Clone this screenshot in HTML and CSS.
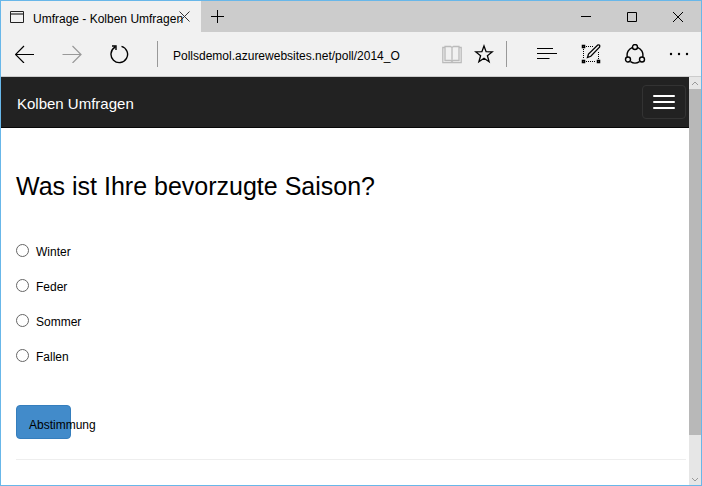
FILE: index.html
```html
<!DOCTYPE html>
<html lang="de">
<head>
<meta charset="utf-8">
<title>Umfrage - Kolben Umfragen</title>
<link rel="stylesheet" href="styles.css">
</head>
<body>
<div class="window">
  <header class="titlebar">
    <div class="tab">
      <svg class="tab-icon" width="14" height="12" viewBox="0 0 14 12"><path d="M.5.5h13v11H.5z" fill="none" stroke="#222"/><path d="M1 3h12" stroke="#777" stroke-width="2"/></svg>
      <span class="tab-title">Umfrage - Kolben Umfragen</span>
      <button class="tab-close" aria-label="Tab schließen"><svg width="11" height="11" viewBox="0 0 11 11"><path d="M.5.5l10 10M10.5.5l-10 10"/></svg></button>
    </div>
    <button class="new-tab" aria-label="Neuer Tab"><svg width="13" height="13" viewBox="0 0 13 13"><path d="M6.5 0v13M0 6.5h13"/></svg></button>
    <div class="window-controls">
      <button aria-label="Minimieren"><svg width="10" height="10" viewBox="0 0 10 10"><path d="M0 4.500h10"/></svg></button>
      <button aria-label="Maximieren"><svg width="10" height="10" viewBox="0 0 10 10"><path d="M.5.5h9v9h-9z"/></svg></button>
      <button aria-label="Schließen"><svg width="10" height="10" viewBox="0 0 10 10"><path d="M0 0l10 10M10 0L0 10"/></svg></button>
    </div>
  </header>
  <div class="toolbar">
    <div class="history">
      <button aria-label="Zurück"><svg width="20" height="18" viewBox="0 0 20 18"><path d="M.5 9.500H19M9 1L.5 9.500 9 18" stroke-width="1.200"/></svg></button>
      <button class="disabled" aria-label="Vorwärts"><svg width="20" height="18" viewBox="0 0 20 18"><path d="M.5 9.500H19M10.500 1L19 9.500 10.500 18" stroke-width="1.200"/></svg></button>
      <button aria-label="Aktualisieren"><svg width="20" height="20" viewBox="0 0 20 20"><path d="M12.500 2.300A8.300 8.300 0 1 1 6 3.200M3 2h4v4" stroke-width="1.400"/></svg></button>
    </div>
    <div class="address">
      <input type="text" aria-label="Adresse" value="Pollsdemol.azurewebsites.net/poll/2014_O">
      <button class="reading" aria-label="Leseansicht"><svg width="20" height="19" viewBox="0 0 20 19"><path d="M3 1.500h5.500L10 2.500l1.500-1H17v14h-5.500L10 16.500l-1.500-1H3zM10 2.500v14M3 2.500H.8v15.200h18.400V2.500H17" stroke-width="1.300"/></svg></button>
      <button aria-label="Favorit"><svg width="20" height="20" viewBox="0 0 20 20"><path d="M10 2l2.100 5.700 6.100.2-4.800 3.800 1.700 6-5.100-3.500-5.100 3.500 1.700-6-4.800-3.800 6.100-.2z" stroke-width="1.300"/></svg></button>
    </div>
    <div class="tools">
      <button aria-label="Hub"><svg width="20" height="20" viewBox="0 0 20 20"><path d="M0 4.500h16M0 9.500h20M0 14.500h12.500" stroke-width="1.200"/></svg></button>
      <button aria-label="Webseitennotiz"><svg width="20" height="20" viewBox="0 0 20 20"><path d="M5 2.500h7M2.500 5v10M5 17.500h10M17.500 8v7" stroke-dasharray="1 1"/><path d="M1.500 1.500h2v2h-2zM1.500 16.500h2v2h-2zM16.500 16.500h2v2h-2z" stroke-width="1.500"/><path d="M6.500 13.500l1-3.500 9-8.800q1.500-.7 2 0t0 2L9.800 12.300z" stroke-width="1.300"/></svg></button>
      <button aria-label="Teilen"><svg width="22" height="20" viewBox="0 0 22 20"><g stroke-width="1.400"><path d="M8.500 3.300A8.300 8.300 0 0 0 3.300 13M13.500 3.300A8.300 8.300 0 0 1 18.700 13M6.500 17.700a8.300 8.300 0 0 0 9 0"/><circle cx="11" cy="3" r="2.500"/><circle cx="4" cy="15.500" r="2.500"/><circle cx="18" cy="15.500" r="2.500"/></g></svg></button>
      <button aria-label="Mehr"><svg width="20" height="20" viewBox="0 0 20 20"><g class="dots"><circle cx="2" cy="10" r="1.200"/><circle cx="10" cy="10" r="1.200"/><circle cx="18" cy="10" r="1.200"/></g></svg></button>
    </div>
  </div>
  <div class="viewport">
    <div class="page">
      <nav class="navbar">
        <a class="brand" href="#">Kolben Umfragen</a>
        <button class="menu-toggle" aria-label="Navigation umschalten"><span></span><span></span><span></span></button>
      </nav>
      <main class="content">
        <h1>Was ist Ihre bevorzugte Saison?</h1>
        <form>
          <label class="choice"><input type="radio" name="choice">Winter</label>
          <label class="choice"><input type="radio" name="choice">Feder</label>
          <label class="choice"><input type="radio" name="choice">Sommer</label>
          <label class="choice"><input type="radio" name="choice">Fallen</label>
          <button class="vote" type="button">Abstimmung</button>
        </form>
        <hr>
      </main>
    </div>
    <div class="scrollbar">
      <button aria-label="Nach oben"><svg width="8" height="5" viewBox="0 0 8 5"><path d="M1 4l3-3 3 3"/></svg></button>
      <div class="track"><div class="thumb"></div></div>
      <button aria-label="Nach unten"><svg width="8" height="5" viewBox="0 0 8 5"><path d="M1 1l3 3 3-3"/></svg></button>
    </div>
  </div>
</div>
</body>
</html>
```
FILE: styles.css
```css
* {
  box-sizing: border-box;
}

body {
  margin: 0;
  background: #fff;
  color: #000;
  font: 12px/16px "Liberation Sans", Arial, sans-serif;
}

button {
  display: flex;
  align-items: center;
  justify-content: center;
  margin: 0;
  padding: 0;
  border: 0;
  background: none;
  color: inherit;
  font: inherit;
}

svg {
  display: block;
  flex: none;
  fill: none;
  stroke: #000;
}

.window {
  display: flex;
  flex-direction: column;
  min-height: 100vh;
  border: 1px solid #68b7e9;
}

.titlebar {
  display: flex;
  height: 31px;
  background: #ccc;
}

.tab {
  display: flex;
  align-items: center;
  width: 200px;
  padding: 0 11px 0 9px;
  background: #f1f1f1;
}

.tab-icon {
  margin-right: 9px;
}

.tab-title {
  flex: 1;
  min-width: 0;
  padding-top: 4px;
  white-space: nowrap;
}

.tab-close svg {
  stroke: #333;
}

.new-tab {
  width: 32px;
}

.window-controls {
  display: flex;
  margin-left: auto;
}

.window-controls button {
  width: 46px;
}

.toolbar {
  display: flex;
  align-items: center;
  height: 45px;
  border-bottom: 1px solid #ccc;
  background: #f1f1f1;
}

.history {
  display: flex;
  align-items: center;
  width: 156px;
  padding-right: 14px;
}

.history button {
  flex: 1;
}

.history .disabled svg {
  stroke: #999;
}

.address {
  display: flex;
  flex: 1;
  align-items: center;
  min-width: 0;
  height: 26px;
  padding-right: 6px;
  border: solid #999;
  border-width: 0 1px;
}

.address input {
  flex: 1;
  min-width: 0;
  margin: 0;
  padding: 4px 15px 0;
  border: 0;
  background: none;
  color: inherit;
  font: inherit;
}

.address button {
  width: 32px;
}

.address .reading svg {
  stroke: #bbb;
}

.tools {
  display: flex;
  padding: 0 0 0 18px;
}

.tools button {
  width: 44px;
}

.dots {
  fill: #000;
  stroke: none;
}

.viewport {
  display: flex;
  flex: 1;
}

.page {
  flex: 1;
  min-width: 0;
}

.navbar {
  display: flex;
  align-items: center;
  justify-content: space-between;
  height: 51px;
  padding: 0 3px 0 16px;
  border-bottom: 1px solid #080808;
  background: #222;
}

.brand {
  padding-top: 4px;
  color: #fff;
  font-size: 15px;
  line-height: 20px;
  text-decoration: none;
}

.menu-toggle {
  flex-direction: column;
  gap: 4px;
  width: 44px;
  height: 34px;
  border: 1px solid #333;
  border-radius: 4px;
}

.menu-toggle span {
  width: 22px;
  height: 2px;
  border-radius: 1px;
  background: #fff;
}

.content {
  padding: 42px 3px 0 15px;
}

h1 {
  margin: 0 0 40px;
  font-size: 25px;
  font-weight: 400;
  line-height: 32px;
}

.choice {
  display: flex;
  align-items: center;
  width: max-content;
  height: 20px;
  margin-bottom: 15px;
}

.choice input {
  appearance: none;
  width: 13px;
  height: 13px;
  margin: 0 7px 4px 0;
  border: 1px solid #666;
  border-radius: 50%;
  background: #fff;
}

.choice input:checked {
  background: radial-gradient(#333 3px, #fff 4px);
}

.vote {
  justify-content: flex-start;
  width: 55px;
  height: 34px;
  margin-top: 38px;
  padding: 6px 0 0 12px;
  border: 1px solid #357ebd;
  border-radius: 4px;
  background: #428bca;
  white-space: nowrap;
}

hr {
  margin: 20px 0;
  border: 0;
  border-top: 1px solid #eee;
}

.scrollbar {
  display: flex;
  flex-direction: column;
  width: 12px;
  background: #e6e6e6;
}

.scrollbar button {
  height: 12px;
}

.scrollbar svg {
  stroke: #999;
}

.track {
  flex: 1;
}

.thumb {
  height: 90%;
  background: #b8b8b8;
}
```
